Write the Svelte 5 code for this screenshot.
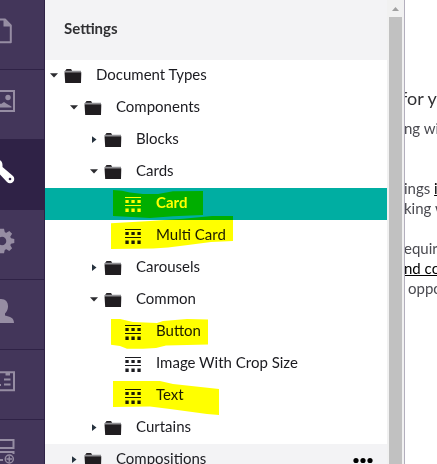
<script>
  const rows = [
    { label: 'Document Types', level: 0, kind: 'open' },
    { label: 'Components', level: 1, kind: 'open' },
    { label: 'Blocks', level: 2, kind: 'closed' },
    { label: 'Cards', level: 2, kind: 'open' },
    { label: 'Card', level: 3, kind: 'leaf', active: true },
    { label: 'Multi Card', level: 3, kind: 'leaf' },
    { label: 'Carousels', level: 2, kind: 'closed' },
    { label: 'Common', level: 2, kind: 'open' },
    { label: 'Button', level: 3, kind: 'leaf' },
    { label: 'Image With Crop Size', level: 3, kind: 'leaf' },
    { label: 'Text', level: 3, kind: 'leaf' },
    { label: 'Curtains', level: 2, kind: 'closed' },
    { label: 'Compositions', level: 1, kind: 'closed', hover: true }
  ];
  const sections = ['content', 'media', 'settings', 'packages', 'users', 'members', 'forms'];
</script>

<div class="app">
  <nav class="rail">
    {#each sections as s}
      <div class="cell" class:current={s === 'settings'}>
        <svg width="44" height="69" viewBox="0 0 44 69">
          {#if s === 'content'}
            <path d="M-8 19.5H5L10.8 25.5V42.3H-8" fill="none" stroke="currentColor" stroke-width="2" stroke-linejoin="round" />
            <path d="M3.5 19V26.5H11.5Z" fill="currentColor" />
          {:else if s === 'media'}
            <rect x="-9" y="21" width="23" height="20" fill="none" stroke="currentColor" stroke-width="2" />
            <circle cx="8" cy="27.5" r="2.7" fill="currentColor" />
            <path d="M-6 37V30L1 34L4 32L7 34L11.5 36.5V37.5H-6Z" fill="currentColor" />
          {:else if s === 'settings'}
            <path d="M-3 20Q3 19 2.5 27L13 36A4.2 4.2 0 0 1 7 42L-5 29Z" fill="currentColor" />
            <circle cx="10" cy="39" r="1.3" fill="#2f2246" />
          {:else if s === 'packages'}
            <g transform="translate(2 31)">
              <circle r="6.8" fill="none" stroke="currentColor" stroke-width="5" />
              {#each [0, 45, 90, 135, 180, 225, 270, 315] as a}
                <path d="M-3 -8L-2 -12.3H2L3 -8Z" fill="currentColor" transform="rotate({a})" />
              {/each}
            </g>
          {:else if s === 'users'}
            <path d="M1 19C6 19 8.3 22.5 8 27C7.8 30 6.5 32 5 33.5V35.5C10 37 14 37.5 14 43H-12C-12 37 -7 37 -3 35.5V33.5C-8 28 -6 19 1 19Z" fill="currentColor" />
          {:else if s === 'members'}
            <path d="M-8 22.2H14V40.2H-8M4 29.5H10.5M4 34.5H10.5M-3 35H1" fill="none" stroke="currentColor" stroke-width="2" />
            <path d="M5.5 22H10V25.5H5.5Z" fill="currentColor" />
          {:else}
            <path d="M-8 20H13.5V28H-8M-8 32H13.5V34M-8 40H3" fill="none" stroke="currentColor" stroke-width="2" />
            <circle cx="9.3" cy="39" r="4" fill="none" stroke="currentColor" stroke-width="1.5" />
            <path d="M6.5 39H12M9.3 36.3V41.7" stroke="currentColor" stroke-width="1.5" />
          {/if}
        </svg>
      </div>
    {/each}
  </nav>

  <section class="tree">
    <header>Settings</header>
    {#each rows as r}
      <div class="row" class:active={r.active} class:hover={r.hover} style="padding-left:{r.level * 20 + 3}px">
        <svg class="caret" width="14" height="32" viewBox="0 0 14 32">
          {#if r.kind === 'open'}
            <path d="M2 13.2H10L6 17.5Z" fill="#2c2c30" />
          {:else if r.kind === 'closed'}
            <path d="M4 12.3L8.5 15.6L4 19Z" fill="#26323e" />
          {/if}
        </svg>
        <svg class="icon" width="20" height="32" viewBox="0 0 20 32">
          {#if r.kind === 'leaf'}
            <g fill="currentColor">
              <path d="M3 8.9H19V10H3ZM3 17H19V18.1H3Z" />
              {#each [3.4, 9.4, 15.4] as x}
                <path d="M{x} 12h3.3v3h-3.3ZM{x} 20.5h3.3v3.4h-3.3Z" />
              {/each}
            </g>
          {:else}
            <path d="M3.5 10.5L4.5 9.1H9L10 10.5V11.5H3.5Z" fill="#242124" />
            <path d="M3 11V11.3H19" stroke="#919195" stroke-width="1.3" fill="none" />
            <path d="M2.5 12.3H19.3L19 23H3.2Z" fill="#201d20" />
          {/if}
        </svg>
        <span>{r.label}</span>
        {#if r.hover}
          <svg class="more" width="20" height="32" viewBox="0 0 20 32">
            <circle cx="3" cy="16.5" r="2.6" /><circle cx="10" cy="16.5" r="2.6" /><circle cx="17" cy="16.5" r="2.6" />
          </svg>
        {/if}
      </div>
    {/each}
  </section>

  <div class="scroll">
    <svg width="17" height="17" viewBox="0 0 17 17"><path d="M5 11L8.5 7L12 11Z" fill="#a0a0a0" /></svg>
    <div class="thumb"></div>
  </div>

  <article>
    <h2>for y</h2>
    <p class="first">ng with</p>
    <p class="gap3">ings <u>in</u></p>
    <p class="king">king w</p>
    <p class="gap2">equire</p>
    <p class="nd"><u>nd co</u></p>
    <p class="oppo">oppor</p>
  </article>

  <svg class="marker" width="437" height="464" viewBox="0 0 437 464" fill="#ff0">
    <path d="M113 190L122 190.7L130 192.5L143 194L158 194L173 191.3L203 191V215L173 216.3L150 218L113 216Z" />
    <path d="M111 223.3L150 221L183 218.7L212 216H233V241L211 242L188 245L168 247.5L153 248.5L111 249Z" />
    <path d="M111 319H120L133 322L157 323L163 321L187 319L208 319.5V344.5L166 345.5L156 348L143 348.7H127L120 346L111 344.7Z" />
    <path d="M113 381H160L173 384L219 389V415L207 414L170 409L150 406.5L113 407Z" />
  </svg>
</div>

<style>
  :global(body) { margin: 0; }
  .app {
    position: relative;
    display: flex;
    width: 437px;
    height: 464px;
    overflow: hidden;
    background: #fff;
    font: 15px/32px Lato, sans-serif;
    color: #1b1b20;
  }
  .rail {
    flex: 0 0 44px;
    border-right: 1px solid #2f2246;
    background: #43365a;
    color: #968da3;
  }
  .cell { height: 69px; border-bottom: 1px solid #2f2246; }
  .cell svg { display: block; }
  .cell.current { background: #2f2246; color: #fff; }
  .tree { flex: 0 0 342px; }
  header {
    height: 60px;
    padding-left: 19px;
    box-sizing: border-box;
    background: #f3f3f5;
    color: #303033;
    font-weight: 700;
    line-height: 56px;
  }
  .row {
    display: flex;
    align-items: center;
    height: 32px;
    box-sizing: border-box;
    padding-right: 14px;
    white-space: nowrap;
  }
  .row span { line-height: 28px; height: 32px; }
  .icon { margin-right: 14px; }
  .active { background: #00aea2; color: #fff; font-weight: 700; }
  .hover { background: #f3f3f5; }
  .more { margin-left: auto; fill: #000; }
  .scroll {
    display: flex;
    flex-direction: column;
    align-items: center;
    flex: 0 0 17px;
    background: #f1f1f1;
    border-right: 1px solid #b3afbd;
  }
  .scroll svg { flex: none; }
  .thumb { flex: 1; width: 13px; background: #c1c1c1; }
  article {
    flex: 1;
    min-width: 0;
    overflow: hidden;
    white-space: nowrap;
    color: #4a4a50;
    line-height: 20px;
  }
  h2 {
    margin: 87px 0 0 -4px;
    font-size: 18px;
    font-weight: 400;
    line-height: 22px;
    color: #303033;
  }
  p { margin: 0 0 0 -1px; }
  .first { margin-top: 9px; }
  .gap3 { margin-top: 40px; }
  .gap2 { margin-top: 20px; }
  .oppo { margin-left: 3px; }
  u { color: #000; }
  .marker { position: absolute; inset: 0; mix-blend-mode: multiply; pointer-events: none; }
</style>
